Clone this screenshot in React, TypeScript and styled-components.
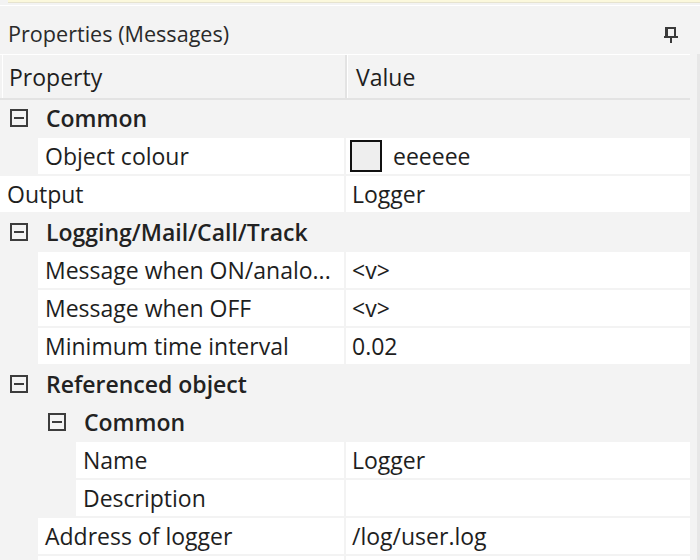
import React from "react"
import styled, { createGlobalStyle } from "styled-components"

const GlobalStyle = createGlobalStyle`
    html, body {
        margin: 0;
        padding: 0;
        background: #f3f3f3;
    }

    body {
        font-family: "Segoe UI", "Open Sans", "Noto Sans", sans-serif;
        font-size: 23px;
        color: #1e1e1e;
    }
`

const Page = styled.div`
    width: 700px;
    height: 560px;
    overflow: hidden;
    background: #f3f3f3;
`

const TopStrip = styled.div`
    margin-left: 8px;
    height: 2px;
    background: #fbf8dc;
    border-bottom: 1px solid #e6e3cf;
`

const Rule = styled.div`
    margin-top: 2px;
    height: 1px;
    background: #ffffff;
`

const TitleBar = styled.div`
    box-sizing: border-box;
    height: 48px;
    padding: 13px 22px 0 8px;

    display: flex;
    flex-direction: row;
    justify-content: space-between;
    align-items: flex-start;
`

const Title = styled.span`
    color: #2a2a2a;
    font-size: 21.6px;
    line-height: 30px;
`

const PinIcon = styled.svg`
    margin-top: 7px;
    width: 14px;
    height: 17px;
    fill: #3a3a3a;
`

const Body = styled.div`
    display: flex;
    flex-direction: row;
`

const Grid = styled.div`
    width: 690px;
    display: flex;
    flex-direction: column;
`

const ScrollEdge = styled.div`
    margin-left: 7px;
    width: 3px;
    height: 510px;
    background: #e7e7e7;
`

const HeaderRow = styled.div`
    display: flex;
    flex-direction: row;
    height: 43px;
    border-top: 1px solid #ffffff;
    border-bottom: 2px solid #e3e3e3;
`

const HeaderCell = styled.div<{ first?: boolean }>`
    box-sizing: border-box;
    display: flex;
    align-items: center;

    ${p => p.first ? `
        margin-left: 2px;
        width: 345px;
        border-left: 1px solid #ffffff;
        border-right: 2px solid #e3e3e3;
        padding-left: 6px;
    ` : `
        flex: 1;
        border-left: 1px solid #ffffff;
        padding-left: 8px;
    `}
`

const CategoryRow = styled.div<{ indent: number }>`
    height: 36px;
    margin-bottom: 2px;
    padding-left: ${p => p.indent + 10}px;

    display: flex;
    flex-direction: row;
    align-items: center;
`

const Toggle = styled.div`
    box-sizing: border-box;
    width: 18px;
    height: 18px;
    border: 2px solid #3c3c3c;

    display: flex;
    align-items: center;
    justify-content: center;

    &::after {
        content: "";
        width: 10px;
        height: 2px;
        background: #3c3c3c;
    }
`

const CategoryLabel = styled.span`
    margin-left: 18px;
    font-weight: 600;
    color: #222222;
    white-space: nowrap;
`

const PropRow = styled.div<{ indent: number }>`
    height: 36px;
    margin-bottom: 2px;
    padding-left: ${p => p.indent}px;

    display: flex;
    flex-direction: row;
`

const NameCell = styled.div`
    box-sizing: border-box;
    flex: 1;
    margin-right: 2px;
    padding-left: 7px;
    background: #ffffff;

    display: flex;
    align-items: center;
    white-space: nowrap;
    overflow: hidden;
`

const ValueCell = styled.div`
    box-sizing: border-box;
    width: 344px;
    padding-left: 6px;
    background: #ffffff;

    display: flex;
    align-items: center;
    white-space: nowrap;
`

const Swatch = styled.div<{ colour: string }>`
    box-sizing: border-box;
    width: 32px;
    height: 32px;
    margin-left: -2px;
    margin-right: 11px;
    border: 2px solid #111111;
    background: ${p => p.colour};
`

type Item =
    | { kind: "cat"; level: number; label: string }
    | { kind: "prop"; level: number; label: string; value?: string; colour?: string }

const items: Item[] = [
    { kind: "cat", level: 0, label: "Common" },
    { kind: "prop", level: 1, label: "Object colour", value: "eeeeee", colour: "#eeeeee" },
    { kind: "prop", level: 0, label: "Output", value: "Logger" },
    { kind: "cat", level: 0, label: "Logging/Mail/Call/Track" },
    { kind: "prop", level: 1, label: "Message when ON/analo...", value: "<v>" },
    { kind: "prop", level: 1, label: "Message when OFF", value: "<v>" },
    { kind: "prop", level: 1, label: "Minimum time interval", value: "0.02" },
    { kind: "cat", level: 0, label: "Referenced object" },
    { kind: "cat", level: 1, label: "Common" },
    { kind: "prop", level: 2, label: "Name", value: "Logger" },
    { kind: "prop", level: 2, label: "Description", value: "" },
    { kind: "prop", level: 1, label: "Address of logger", value: "/log/user.log" },
    { kind: "prop", level: 1, label: "", value: "" },
]

const Pin = () => (
    <PinIcon viewBox="0 0 14 17">
        <rect x="1" y="1" width="11" height="2" />
        <rect x="1" y="1" width="3" height="10" />
        <rect x="10" y="1" width="2" height="10" />
        <rect x="0" y="10" width="14" height="2" />
        <rect x="6" y="12" width="2" height="5" />
    </PinIcon>
)

export default function App() {
    return (
        <Page>
            <GlobalStyle />
            <TopStrip />
            <Rule />
            <TitleBar>
                <Title>Properties (Messages)</Title>
                <Pin />
            </TitleBar>
            <Body>
                <Grid>
                    <HeaderRow>
                        <HeaderCell first>Property</HeaderCell>
                        <HeaderCell>Value</HeaderCell>
                    </HeaderRow>
                    {items.map((item, i) =>
                        item.kind === "cat" ? (
                            <CategoryRow key={i} indent={item.level * 38}>
                                <Toggle />
                                <CategoryLabel>{item.label}</CategoryLabel>
                            </CategoryRow>
                        ) : (
                            <PropRow key={i} indent={item.level * 38}>
                                <NameCell>{item.label}</NameCell>
                                <ValueCell>
                                    {item.colour && <Swatch colour={item.colour} />}
                                    {item.value}
                                </ValueCell>
                            </PropRow>
                        )
                    )}
                </Grid>
                <ScrollEdge />
            </Body>
        </Page>
    )
}
